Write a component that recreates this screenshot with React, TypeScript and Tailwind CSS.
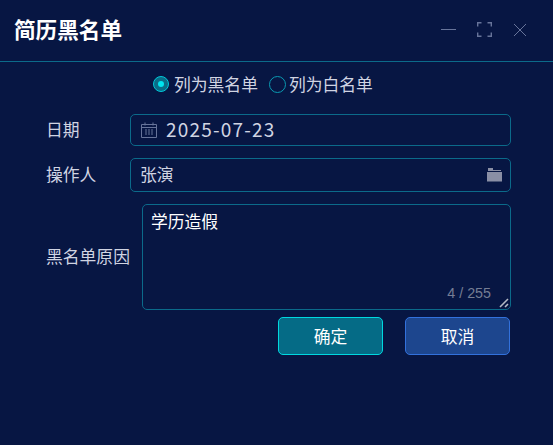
const font = { fontFamily: '"Noto Sans CJK SC", "Liberation Sans", sans-serif' };

export default function App() {
  return (
    <div className="h-[445px] w-[553px] overflow-hidden bg-[#071643] text-[16.8px] text-[#d0d4e2]" style={font}>
      {/* Header */}
      <div className="flex h-[62px] items-center justify-between border-b border-[#0b6a8a] pb-[2px] pl-[14px] pr-[26px]">
        <h1 className="text-[21.6px] font-bold text-white">简历黑名单</h1>
        <div className="flex items-center gap-[21px] text-[#67749a]">
          <svg width="15" height="15" viewBox="0 0 15 15" fill="none" stroke="currentColor">
            <path d="M0 7.5h15" />
          </svg>
          <svg width="15" height="15" viewBox="0 0 15 15" fill="none" stroke="currentColor" strokeWidth="1.4">
            <path d="M.7 4.5V.7h3.800M10.500.7h3.800v3.800M14.300 10.500v3.800h-3.800M4.500 14.300H.7v-3.800" />
          </svg>
          <svg width="14" height="14" viewBox="0 0 14 14" fill="none" stroke="currentColor">
            <path d="M1 1l12 12M13 1 1 13" />
          </svg>
        </div>
      </div>

      {/* Radio group */}
      <div className="mt-[10px] flex h-6 items-center pl-[153px]">
        <span className="flex h-4 w-4 items-center justify-center rounded-full border border-[#00c8d8] bg-[#0a6d88]">
          <span className="h-[6px] w-[6px] rounded-full bg-[#00e5f0]" />
        </span>
        <span className="ml-[5px] pt-[1px]">列为黑名单</span>
        <span className="ml-[11px] h-[17px] w-[17px] rounded-full border border-[#0a9ab2]" />
        <span className="ml-[3px] pt-[1px]">列为白名单</span>
      </div>

      {/* Form */}
      <div className="mt-[18px] flex flex-col pl-[46px] pr-[42px]">
        <div className="flex h-8 items-center">
          <label className="w-[84px] pb-[1px]">日期</label>
          <div className="flex h-8 flex-1 items-center rounded-[5px] border border-[#0b6a8a] pl-[10px]">
            <svg width="16" height="16" viewBox="0 0 16 16" fill="none" stroke="#67749a">
              <path d="M.5 2.500h15v13H.5zM.5 5.500h15M4 .5v3M12 .5v3" />
              <path d="M4 8h2M7 8h2M10 8h2M4 10h2M7 10h2M10 10h2M4 12h2M7 12h2M10 12h2" strokeWidth="1.200" />
            </svg>
            <span className="ml-[9px] pb-[1px] text-[19px] tracking-[1.200px]">2025-07-23</span>
          </div>
        </div>
        <div className="mt-3 flex h-[34px] items-center">
          <label className="w-[84px]">操作人</label>
          <div className="flex h-[34px] flex-1 items-center justify-between rounded-[5px] border border-[#0b6a8a] pl-[9px] pr-2">
            <span>张演</span>
            <svg width="15" height="14" viewBox="0 0 15 14" fill="#8a8fa5">
              <path d="M1 0h5v2h8v1H1zM0 4h15v9.500H0z" />
            </svg>
          </div>
        </div>
        <div className="mt-3 flex h-[106px] items-center">
          <label className="w-[96px]">黑名单原因</label>
          <div className="relative h-[106px] flex-1 rounded-[5px] border border-[#0b6a8a] px-2 py-1 text-white">
            学历造假
            <span className="absolute bottom-[5px] right-[19px] text-[14.300px] text-[#757d94]" style={{ fontFamily: '"Liberation Sans", sans-serif' }}>4 / 255</span>
            <svg className="absolute bottom-[1px] right-[1px]" width="10" height="10" viewBox="0 0 10 10">
              <path d="M1 9 9 1M6 9 9 6" stroke="#b5b9c5" strokeWidth="1.600" />
            </svg>
          </div>
        </div>

        {/* Buttons */}
        <div className="mt-[7px] flex justify-end gap-[22px] pr-px">
          <button className="flex h-[38px] w-[105px] items-center justify-center rounded-[5px] border border-[#00d8e0] bg-[#056b86] pt-[1px] text-white">确定</button>
          <button className="flex h-[38px] w-[105px] items-center justify-center rounded-[5px] border border-[#3271dc] bg-[#1d468e] pt-[1px] text-white">取消</button>
        </div>
      </div>
    </div>
  );
}
